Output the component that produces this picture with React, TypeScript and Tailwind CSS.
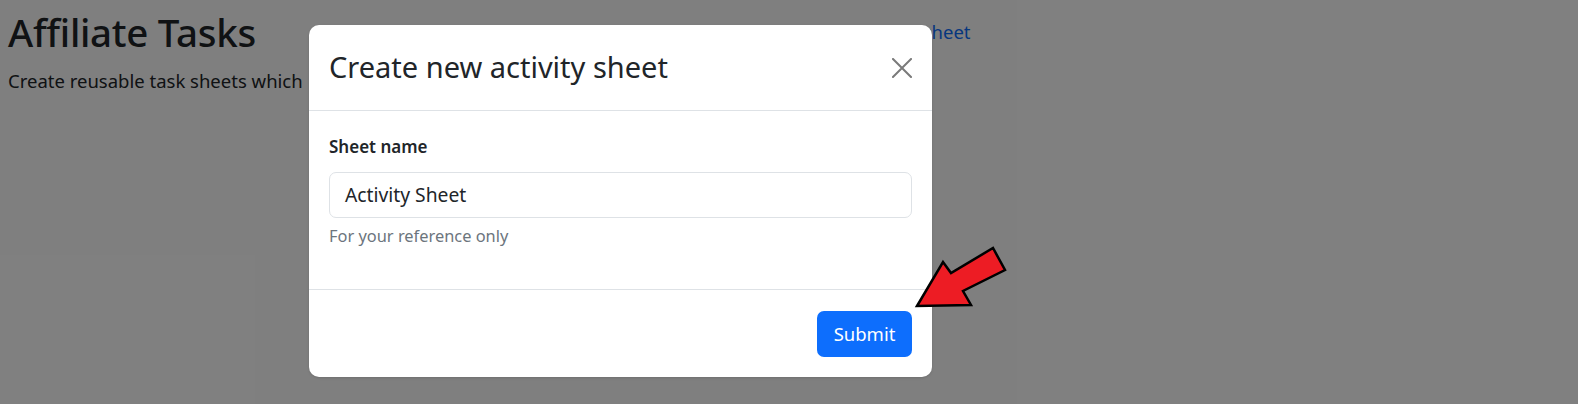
import React from "react";

const font = { fontFamily: '"Noto Sans", "Open Sans", Arial, sans-serif' };

function CloseIcon() {
  return (
    <svg width="20" height="20" viewBox="0 0 20 20" fill="none">
      <path d="M1 1L19 19M19 1L1 19" stroke="#7a7a7a" strokeWidth="2" strokeLinecap="square" />
    </svg>
  );
}

function PointerArrow() {
  return (
    <svg
      className="pointer-events-none absolute left-0 top-0"
      width="1578"
      height="404"
      viewBox="0 0 1578 404"
    >
      <polygon
        points="917,306 943,262 951,273 993,248 1005,270 963,291 971,305"
        fill="#ed1c24"
        stroke="#000"
        strokeWidth="2.5"
        strokeLinejoin="miter"
      />
    </svg>
  );
}

export default function App() {
  return (
    <div className="relative h-[404px] w-full overflow-hidden bg-white text-[#212529]" style={font}>
      {/* page behind the dialog */}
      <div className="flex px-2 pt-[9px]">
        <div className="w-[790px]">
          <h1 className="text-[38.5px] font-medium leading-[46px] tracking-[-0.3px]">Affiliate Tasks</h1>
          <p className="mt-[12px] text-[18.5px] leading-[28px]">
            Create reusable task sheets which
            <span className="ml-[6px]">can be assigned to your affiliates.</span>
          </p>
        </div>
        <a className="mt-[9px] text-[18.5px] leading-[28px] text-[#0d6efd]">+ New activity sheet</a>
      </div>

      {/* backdrop + dialog */}
      <div className="absolute inset-0 bg-black/50 pl-[309px] pt-[25px]">
        <div className="flex w-[623px] flex-col rounded-[10px] bg-white shadow-sm">
          <div className="flex h-[86px] items-center justify-between border-b border-[#dee2e6] pl-[20px] pr-[15px]">
            <h5 className="text-[29px] font-normal leading-[1.2] text-[#212529]">Create new activity sheet</h5>
            <button className="flex h-[30px] w-[30px] items-center justify-center">
              <CloseIcon />
            </button>
          </div>

          <div className="px-5 pb-10 pt-[21px]">
            <label className="block text-[17px] font-semibold leading-[30px]">Sheet name</label>
            <div className="mt-[10px] flex h-[46px] items-center rounded-[7px] border border-[#dee2e6] px-[15px] text-[19.3px]">
              Activity Sheet
            </div>
            <div className="mt-[5px] text-[16.4px] leading-[26px] text-[#6c757d]">For your reference only</div>
          </div>

          <div className="flex h-[88px] items-center justify-end border-t border-[#dee2e6] px-5">
            <button className="h-[46px] w-[95px] rounded-[7px] bg-[#0d6efd] text-[18.5px] text-white">Submit</button>
          </div>
        </div>
      </div>

      <PointerArrow />
    </div>
  );
}
